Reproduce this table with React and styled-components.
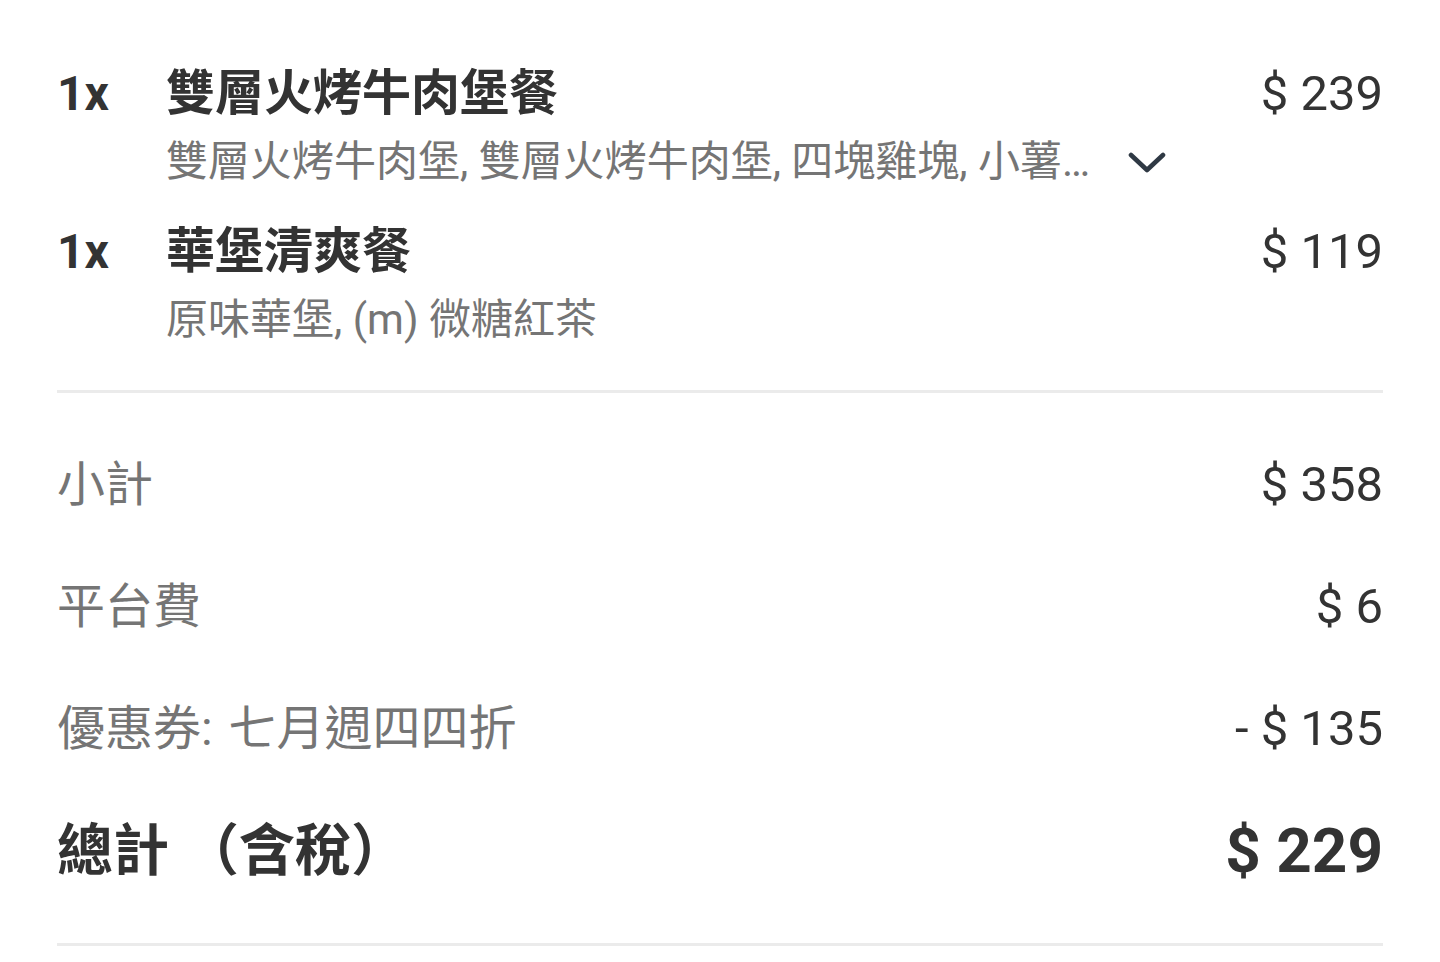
import React from 'react';
import styled, { createGlobalStyle } from 'styled-components';

const GlobalStyle = createGlobalStyle`
  html, body {
    margin: 0;
    padding: 0;
    background: #ffffff;
  }
  body {
    font-family: Roboto, "Noto Sans CJK TC", sans-serif;
    color: #333333;
  }
`;

const items = [
  {
    qty: '1x',
    name: '雙層火烤牛肉堡餐',
    detail: '雙層火烤牛肉堡, 雙層火烤牛肉堡, 四塊雞塊, 小薯條(中), 可口可樂(中)',
    price: '$ 239',
    expandable: true,
  },
  {
    qty: '1x',
    name: '華堡清爽餐',
    detail: '原味華堡, (m) 微糖紅茶',
    price: '$ 119',
    expandable: false,
  },
];

const summary = [
  { label: '小計', value: '$ 358' },
  { label: '平台費', value: '$ 6' },
  { label: '優惠券: 七月週四四折', value: '- $ 135' },
];

function Chevron() {
  return (
    <ChevronBox>
      <svg width="38" height="22" viewBox="0 0 38 22" fill="none">
        <polyline
          points="3,4 19,19 35,4"
          stroke="#2f3944"
          strokeWidth="4.6"
          strokeLinecap="round"
          strokeLinejoin="round"
        />
      </svg>
    </ChevronBox>
  );
}

export default function App() {
  return (
    <>
      <GlobalStyle />
      <Page>
        <ItemList>
          {items.map((item, i) => (
            <Item key={i}>
              <Qty>{item.qty}</Qty>
              <Info>
                <Name>{item.name}</Name>
                <DetailRow>
                  <Detail clip={item.expandable}>{item.detail}</Detail>
                  {item.expandable && <Chevron />}
                </DetailRow>
              </Info>
              <Price>{item.price}</Price>
            </Item>
          ))}
        </ItemList>
        <Divider />
        <Summary>
          {summary.map((row, i) => (
            <SummaryRow key={i}>
              <Label>{row.label}</Label>
              <Amount>{row.value}</Amount>
            </SummaryRow>
          ))}
          <SummaryRow>
            <Label total>總計 （含稅）</Label>
            <Amount total>$ 229</Amount>
          </SummaryRow>
        </Summary>
        <Divider />
      </Page>
    </>
  );
}

const Page = styled.div`
  padding: 0 57px;
`;

const ItemList = styled.div`
  display: flex;
  flex-direction: column;
  gap: 30px;
  padding-top: 62px;
  padding-bottom: 42px;
`;

const Item = styled.div`
  display: grid;
  grid-template-columns: 109px 1fr 215px;
  align-items: start;
`;

const Qty = styled.div`
  font-size: 48px;
  font-weight: 700;
  line-height: 64px;
  color: #333333;
`;

const Info = styled.div`
  display: flex;
  flex-direction: column;
  gap: 8px;
  min-width: 0;
`;

const Name = styled.div`
  font-size: 49px;
  font-weight: 700;
  line-height: 64px;
  color: #333333;
`;

const DetailRow = styled.div`
  display: flex;
  align-items: center;
  min-width: 0;
`;

const Detail = styled.div`
  font-size: 42px;
  line-height: 56px;
  color: #757575;
  white-space: nowrap;
  overflow: hidden;
  text-overflow: ellipsis;
  ${(p) => (p.clip ? 'width: 944px;' : '')}
`;

const ChevronBox = styled.div`
  display: flex;
  align-items: center;
  justify-content: center;
  margin-left: 18px;
  width: 42px;
  height: 56px;
`;

const Price = styled.div`
  font-size: 49px;
  line-height: 64px;
  color: #333333;
  text-align: right;
`;

const Divider = styled.div`
  height: 3px;
  background: #ebebeb;
`;

const Summary = styled.div`
  display: flex;
  flex-direction: column;
  gap: 50px;
  padding: 56px 0;
`;

const SummaryRow = styled.div`
  display: flex;
  align-items: center;
  justify-content: space-between;
  height: 72px;
`;

const Label = styled.div`
  font-size: ${(p) => (p.total ? '56px' : '48px')};
  font-weight: ${(p) => (p.total ? 700 : 400)};
  color: ${(p) => (p.total ? '#333333' : '#757575')};
  line-height: 72px;
  word-spacing: ${(p) => (p.total ? '0' : '4px')};
`;

const Amount = styled.div`
  font-size: ${(p) => (p.total ? '62px' : '49px')};
  font-weight: ${(p) => (p.total ? 700 : 400)};
  color: #333333;
  line-height: 72px;
`;
